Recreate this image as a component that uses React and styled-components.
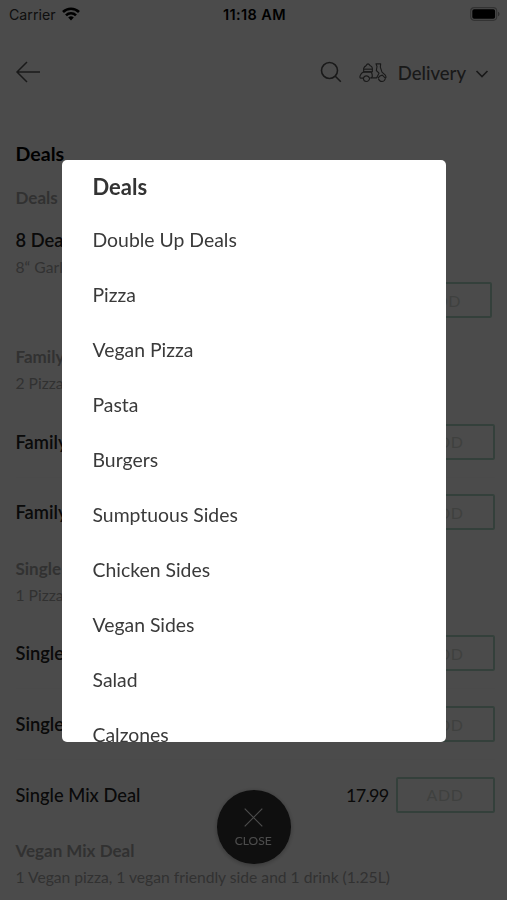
import styled, { createGlobalStyle } from "styled-components";

const GlobalStyle = createGlobalStyle`
  * {
    box-sizing: border-box;
  }
  body {
    margin: 0;
    background: #fff;
    font-family: "Lato", sans-serif;
    overflow: hidden;
  }
`;

const Screen = styled.div`
  height: 900px;
  overflow: hidden;
  background: #fcfcfc;
`;

const StatusBar = styled.div`
  height: 28px;
  padding: 0 7px 0 9px;
  display: grid;
  grid-template-columns: 1fr auto 1fr;
  align-items: center;
  font-family: "Inter", sans-serif;
  font-size: 14.2px;
  color: #333;

  .carrier {
    display: flex;
    align-items: center;
    gap: 6px;
  }
  .time {
    font-size: 14.5px;
    font-weight: 600;
    letter-spacing: 0.4px;
    color: #000;
  }
  .battery {
    justify-self: end;
    display: flex;
  }
`;

const NavBar = styled.div`
  height: 88px;
  padding: 0 18px 0 15px;
  display: flex;
  align-items: center;
  color: #555;

  svg {
    display: block;
  }
  .search {
    margin-left: auto;
    margin-right: 17px;
  }
  .mode {
    margin: 0 9px 0 11px;
    padding-top: 2px;
    font-size: 18.5px;
    font-weight: 500;
    line-height: 24px;
  }
  .chevron {
    margin-top: 3px;
  }
`;

const Menu = styled.div`
  padding: 26px 12.5px 0 15.5px;
`;

const Title = styled.div`
  font-size: 19.6px;
  font-weight: 700;
  line-height: 24px;
`;

const GroupName = styled.div`
  font-size: 17px;
  font-weight: 700;
  line-height: 24px;
  color: #a6a6a6;
`;

const Description = styled.div`
  font-size: 15.65px;
  line-height: 20px;
  color: #a6a6a6;
  margin-top: 4px;
  white-space: nowrap;
`;

const ProductName = styled.div`
  font-size: 18.3px;
  font-weight: ${(props) => (props.$light ? 500 : 600)};
  line-height: 24px;
  color: #222;
`;

const Featured = styled.div`
  display: flex;
  flex-direction: column;
  margin-bottom: 18.5px;

  ${GroupName} {
    margin-top: 20px;
  }
  ${ProductName} {
    margin-top: 18px;
  }
  ${Description} {
    margin-top: 5px;
  }
`;

const AddButton = styled.button`
  width: 99px;
  height: 36px;
  border: 2px solid #afd6c6;
  border-radius: 2px;
  background: transparent;
  color: #d2d8d2;
  font-family: inherit;
  font-size: 16px;
  letter-spacing: 0.6px;
  padding: 0;
  ${(props) => props.$featured && "align-self: flex-end; margin: 5px 2.5px 0 0;"}
`;

const Group = styled.div`
  padding-top: 8.7px;

  .products {
    margin-top: 13.8px;
  }
`;

const Product = styled.div`
  height: 70.6px;
  display: flex;
  align-items: center;
  border-bottom: 1px solid ${(props) => (props.$last ? "transparent" : "#f8f8f8")};

  .price {
    margin-left: auto;
    margin-right: 7px;
    font-size: 18px;
    letter-spacing: -0.7px;
    color: #222;
  }
`;

const CloseButton = styled.button`
  position: fixed;
  left: 217px;
  top: 790px;
  width: 73.5px;
  height: 73.5px;
  border: 0;
  border-radius: 50%;
  background: #333;
  box-shadow: 0 1px 5px rgba(0, 0, 0, 0.3);
  color: #fff;
  font-family: inherit;
  font-size: 12px;
  padding: 2px 1px 0 0;
  display: flex;
  flex-direction: column;
  align-items: center;
  justify-content: center;
  gap: 6px;
`;

const Overlay = styled.div`
  position: fixed;
  inset: 0;
  background: rgba(0, 0, 0, 0.7);
  display: flex;
  justify-content: center;
  align-items: flex-start;
  padding-top: 159.5px;
`;

const Dialog = styled.div`
  width: 384px;
  height: 582px;
  overflow: hidden;
  border-radius: 5px;
  background: #fff;
  padding: 0 31px;
  color: #3a3a3a;
`;

const DialogTitle = styled.div`
  height: 52.5px;
  line-height: 53px;
  font-size: 22px;
  font-weight: 700;
  color: #333;
`;

const Category = styled.div`
  height: 55px;
  line-height: 55px;
  font-size: 19.4px;
`;

const categories = [
  "Double Up Deals",
  "Pizza",
  "Vegan Pizza",
  "Pasta",
  "Burgers",
  "Sumptuous Sides",
  "Chicken Sides",
  "Vegan Sides",
  "Salad",
  "Calzones",
];

const groups = [
  {
    name: "Family",
    description: "2 Pizza",
    products: [{ name: "Family" }, { name: "Family" }],
  },
  {
    name: "Single",
    description: "1 Pizza",
    products: [
      { name: "Single" },
      { name: "Single" },
      { name: "Single Mix Deal", price: "17.99", light: true },
    ],
  },
  {
    name: "Vegan Mix Deal",
    description: "1 Vegan pizza, 1 vegan friendly side and 1 drink (1.25L)",
    products: [],
  },
];

const WifiIcon = () => (
  <svg width="18" height="14" viewBox="0 0 18 14" fill="none" stroke="#000" strokeWidth="2.6">
    <path d="M1 5a11.3 11.3 0 0 1 16 0" />
    <path d="M4 8.4a7 7 0 0 1 10 0" />
    <path d="M9 13.5 6.2 10.6a4 4 0 0 1 5.6 0Z" fill="#000" stroke="none" />
  </svg>
);

const BatteryIcon = () => (
  <svg width="30" height="14" viewBox="0 0 30 14">
    <rect x="0.7" y="0.7" width="26" height="12.6" rx="3.5" fill="none" stroke="#aaa" strokeWidth="1.2" />
    <rect x="2.3" y="2.3" width="22.8" height="9.4" rx="1.8" />
    <path d="M28 4.7v4.6c2-.6 2-4 0-4.6Z" fill="#999" />
  </svg>
);

const BackIcon = () => (
  <svg width="26" height="22" viewBox="0 0 26 22" fill="none" stroke="currentColor" strokeWidth="1.5">
    <path d="M25 11H2M12 1 2 11l10 10" />
  </svg>
);

const SearchIcon = () => (
  <svg className="search" width="22" height="22" viewBox="0 0 22 22" fill="none" stroke="currentColor" strokeWidth="1.6">
    <circle cx="9.5" cy="9.5" r="8" />
    <path d="m15.3 15.3 5.5 5.5" />
  </svg>
);

const ScooterIcon = () => (
  <svg width="28" height="21" viewBox="0 0 84 62" fill="none" stroke="currentColor" strokeWidth="3.4" strokeLinejoin="round">
    <path d="M14 29V18Q17 12 21 11Q24 5 27 5T34 11Q39 13 40 18V29Z" />
    <path d="M14 21H40" />
    <path d="M13 48H5Q2 48 3 42Q7 29 18 29H36Q41 35 40 44L34 48" />
    <path d="M13 49Q14 58 22 58T32 49Q29 41 22 41T13 49" />
    <path d="M36 47H53L60 33L52 25L54 13L51 5H65L64 15L69 30L79 39Q83 46 79 48L70 39Q62 40 57 48" />
    <path d="M58 49Q61 58 69 58T79 49" />
  </svg>
);

const ChevronIcon = () => (
  <svg className="chevron" width="14" height="10" viewBox="0 0 14 10" fill="none" stroke="currentColor" strokeWidth="1.7">
    <path d="m1.5 2 5.5 5.5L12.5 2" />
  </svg>
);

const CrossIcon = () => (
  <svg width="19" height="19" viewBox="0 0 19 19" fill="none" stroke="#fff" strokeWidth="1.2">
    <path d="m.7.7 17.6 17.6M18.3.7.7 18.3" />
  </svg>
);

export default () => {
  return (
    <>
      <GlobalStyle />
      <Screen>
        <StatusBar>
          <div className="carrier">
            Carrier <WifiIcon />
          </div>
          <div className="time">11:18 AM</div>
          <div className="battery">
            <BatteryIcon />
          </div>
        </StatusBar>
        <NavBar>
          <BackIcon />
          <SearchIcon />
          <ScooterIcon />
          <span className="mode">Delivery</span>
          <ChevronIcon />
        </NavBar>
        <Menu>
          <Title>Deals</Title>
          <Featured>
            <GroupName>Deals</GroupName>
            <ProductName>8 Deal</ProductName>
            <Description>8“ Garl</Description>
            <AddButton $featured>ADD</AddButton>
          </Featured>
          {groups.map((group) => (
            <Group key={group.name}>
              <GroupName>{group.name}</GroupName>
              <Description>{group.description}</Description>
              <div className="products">
                {group.products.map((product, i) => (
                  <Product key={i} $last={i == group.products.length - 1}>
                    <ProductName $light={product.light}>{product.name}</ProductName>
                    <span className="price">{product.price}</span>
                    <AddButton>ADD</AddButton>
                  </Product>
                ))}
              </div>
            </Group>
          ))}
        </Menu>
        <CloseButton>
          <CrossIcon />
          CLOSE
        </CloseButton>
      </Screen>
      <Overlay>
        <Dialog>
          <DialogTitle>Deals</DialogTitle>
          {categories.map((category) => (
            <Category key={category}>{category}</Category>
          ))}
        </Dialog>
      </Overlay>
    </>
  );
};
